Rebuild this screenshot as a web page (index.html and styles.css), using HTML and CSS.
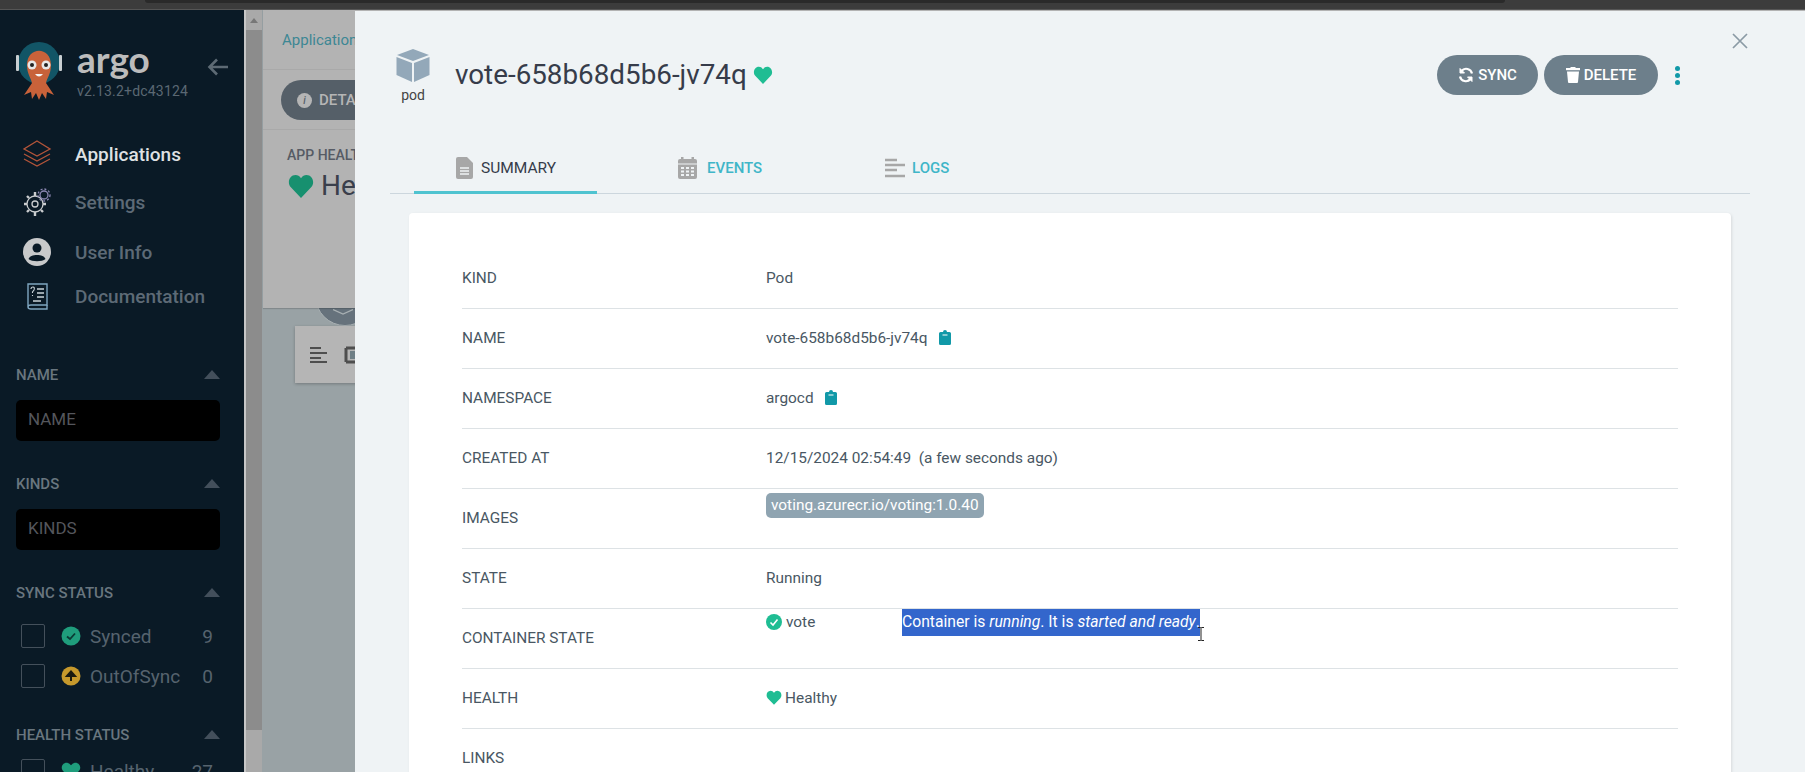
FILE: index.html
```html
<!DOCTYPE html>
<html lang="en">
<head>
    <meta charset="UTF-8">
    <title>vote-658b68d5b6-jv74q - Argo CD</title>
    <link rel="stylesheet" href="styles.css">
</head>
<body>
    <div class="chrome"><div class="chrome-tab"></div></div>
    <div class="main">
        <div class="sidebar">
            <div class="brand">
                <svg class="logo" width="46" height="60" viewBox="0 0 46 60">
                    <circle cx="23" cy="22" r="21" fill="#125566"/>
                    <rect x="0" y="14" width="3" height="16" rx="1" fill="#c9cfd2"/>
                    <rect x="43" y="14" width="3" height="16" rx="1" fill="#c9cfd2"/>
                    <path d="M11 24C11 5 35 5 35 24C35 33 31 37 30 42L38 54 31 51 30 58 26 52 23 59 20 52 16 58 15 51 8 54 16 42C15 37 11 33 11 24Z" fill="#c8623a"/>
                    <circle cx="16" cy="24" r="4.500" fill="#e8e8e8"/>
                    <circle cx="30" cy="24" r="4.500" fill="#e8e8e8"/>
                    <circle cx="16" cy="24" r="2" fill="#222"/>
                    <circle cx="30" cy="24" r="2" fill="#222"/>
                    <path d="M19 33Q23 38 27 33Z" fill="#f4f4f4"/>
                </svg>
                <div class="brand-text">
                    <div class="brand-name">argo</div>
                    <div class="brand-version">v2.13.2+dc43124</div>
                </div>
                <svg class="back" width="22" height="18" viewBox="0 0 22 18"><path d="M21 9H3M10 1.500L2.500 9 10 16.500" fill="none" stroke="#5d6a74" stroke-width="2.600"/></svg>
            </div>

            <div class="nav">
                <div class="nav-item nav-active">
                    <svg width="30" height="30" viewBox="0 0 30 30" fill="none" stroke="#b4553a" stroke-width="1.300"><path d="M15 2L28 10 15 17 2 10Z"/><path d="M2 15L15 22 28 15"/><path d="M2 20L15 27 28 20"/></svg>
                    <span>Applications</span>
                </div>
                <div class="nav-item nav-settings">
                    <svg width="30" height="30" viewBox="0 0 30 30" fill="none" stroke="#c9ccce" stroke-width="1.300"><circle cx="13" cy="17" r="8"/><circle cx="13" cy="17" r="3"/><path d="M13 5v4M13 25v4M2 17h3M21 17h3M5 9l2 2M5 25l2-2M21 25l-2-2" stroke-width="2.400"/><circle cx="22" cy="8" r="4" stroke="#8d89b4"/><circle cx="22" cy="8" r="6" stroke="#8d89b4" stroke-dasharray="2 2"/></svg>
                    <span>Settings</span>
                </div>
                <div class="nav-item nav-user">
                    <svg width="30" height="30" viewBox="0 0 30 30"><circle cx="15" cy="15" r="14" fill="#c8c9ca"/><circle cx="15" cy="11" r="4.500" fill="#0a1a26"/><path d="M6.500 22C8 16.500 22 16.500 23.500 22C20 25 10 25 6.500 22Z" fill="#0a1a26"/></svg>
                    <span>User Info</span>
                </div>
                <div class="nav-item nav-docs">
                    <svg width="30" height="30" viewBox="0 0 30 30" fill="none" stroke="#c9d3d9" stroke-width="1.400"><path d="M6 3H25V24H9Q6 24 6 26V3Z" stroke="#7fa6c0"/><path d="M6 26Q6 28 9 28H25V24" stroke="#7fa6c0"/><path d="M15 8H22M15 12H22M15 16H22M11 20H19"/><path d="M9 8Q9 6 11 6T12 9L10.500 11V12M10.500 14V15" stroke-width="1.100"/></svg>
                    <span>Documentation</span>
                </div>
            </div>

            <div class="filter-head filter-name"><span>NAME</span><i class="caret"></i></div>
            <div class="filter-input">NAME</div>

            <div class="filter-head filter-kinds"><span>KINDS</span><i class="caret"></i></div>
            <div class="filter-input">KINDS</div>

            <div class="filter-head filter-sync"><span>SYNC STATUS</span><i class="caret"></i></div>
            <div class="filter-row">
                <i class="check"></i>
                <svg width="20" height="20" viewBox="0 0 20 20"><circle cx="10" cy="10" r="9.500" fill="#1f9d7c"/><path d="M6 10.500L9 13 14 7.500" fill="none" stroke="#0a3a34" stroke-width="1.800"/></svg>
                <span class="filter-label">Synced</span><span class="filter-count">9</span>
            </div>
            <div class="filter-row">
                <i class="check"></i>
                <svg width="20" height="20" viewBox="0 0 20 20"><circle cx="10" cy="10" r="9.500" fill="#c6992c"/><path d="M10 15V8M6 10L10 5.500 14 10Z" fill="#1a1a10" stroke="#1a1a10" stroke-width="2"/></svg>
                <span class="filter-label">OutOfSync</span><span class="filter-count">0</span>
            </div>

            <div class="filter-head filter-health"><span>HEALTH STATUS</span><i class="caret"></i></div>
            <div class="filter-row">
                <i class="check"></i>
                <svg width="20" height="20" viewBox="0 0 24 24"><path d="M12 22L2.500 12C-1 8 1.500 2 7 2Q10 2 12 5 14 2 17 2C22.500 2 25 8 21.500 12Z" fill="#1f9d7c"/></svg>
                <span class="filter-label">Healthy</span><span class="filter-count">27</span>
            </div>
        </div>

        <div class="page-scroll">
            <i class="scroll-up"></i>
            <div class="page-thumb"></div>
        </div>

        <div class="page">
            <div class="page-top">
                <div class="crumbs">Applications</div>
                <div class="page-actions"><div class="page-btn"><i>i</i>DETAILS</div></div>
                <div class="page-health">
                    <div class="page-health-label">APP HEALTH</div>
                    <div class="page-health-value">
                        <svg width="28" height="24" viewBox="0 0 24 22"><path d="M12 22L2.500 12C-1 8 1.500 1 7 1Q10 1 12 4 14 1 17 1C22.500 1 25 8 21.500 12Z" fill="#17906f"/></svg>
                        <span>Healthy</span>
                    </div>
                </div>
            </div>
            <div class="page-graph">
                <div class="graph-node">
                    <svg class="node-chevron" width="20" height="6" viewBox="0 0 20 6"><path d="M0 0.500L10 5 20 0.500" fill="none" stroke="#a8b0b3" stroke-width="1.200"/></svg>
                </div>
                <div class="graph-tools">
                    <svg width="18" height="16" viewBox="0 0 18 16" fill="none" stroke="#4e4e4e" stroke-width="2"><path d="M0 1H11M0 6H17M0 11H11M0 15H17"/></svg>
                    <svg width="18" height="18" viewBox="0 0 18 18"><path d="M2 2H18M2 16H18M2 2V16" fill="none" stroke="#4e4e4e" stroke-width="3"/><rect x="6" y="5" width="12" height="8" fill="#6f7f86"/></svg>
                </div>
            </div>
        </div>

        <div class="panel">
            <div class="panel-body">
                <svg class="panel-close" width="16" height="16" viewBox="0 0 16 16"><path d="M1 1L15 15M15 1L1 15" stroke="#8b9aa5" stroke-width="1.700"/></svg>

                <div class="panel-head">
                    <div class="kind-box">
                        <svg width="34" height="35" viewBox="0 0 34 35"><path d="M17 1L33 7 17 13 1 7Z" fill="#93a8b9"/><path d="M0.500 9L16 15V34L0.500 27Z" fill="#93a8b9"/><path d="M33.500 9L18 15V34L33.500 27Z" fill="#93a8b9"/></svg>
                        <div class="kind-label">pod</div>
                    </div>
                    <div class="panel-title">vote-658b68d5b6-jv74q</div>
                    <svg class="title-heart" width="20" height="18" viewBox="0 0 24 22"><path d="M12 22L2.500 12C-1 8 1.500 1 7 1Q10 1 12 4 14 1 17 1C22.500 1 25 8 21.500 12Z" fill="#1fbd93"/></svg>
                    <div class="panel-actions">
                        <div class="btn btn-sync">
                            <svg width="16" height="16" viewBox="0 0 16 16" fill="none" stroke="#fff" stroke-width="2.200"><path d="M14 6.500A6 6 0 0 0 3.500 4"/><path d="M2 9.500A6 6 0 0 0 12.500 12"/><path d="M2 1.500V6H6.500L2 1.500Z" fill="#fff" stroke-width="1"/><path d="M14 14.500V10H9.500L14 14.500Z" fill="#fff" stroke-width="1"/></svg>
                            SYNC
                        </div>
                        <div class="btn btn-delete">
                            <svg width="14" height="16" viewBox="0 0 14 16" fill="#fff"><rect x="0" y="1" width="14" height="2.200"/><rect x="4.500" y="0" width="5" height="2"/><path d="M1 4.500H13L12 15Q12 16 11 16H3Q2 16 2 15Z"/></svg>
                            DELETE
                        </div>
                        <div class="kebab"><i></i><i></i><i></i></div>
                    </div>
                </div>

                <div class="tabs">
                    <div class="tab tab-active">
                        <svg width="17" height="22" viewBox="0 0 17 22" fill="#a7a7a7"><path d="M2 0H11L17 6V20Q17 22 15 22H2Q0 22 0 20V2Q0 0 2 0Z"/><path d="M4 11H13M4 14H13M4 17H13" stroke="#eff3f5" stroke-width="1.300"/></svg>
                        <span>SUMMARY</span>
                    </div>
                    <div class="tab tab-events">
                        <svg width="19" height="22" viewBox="0 0 19 22" fill="#a7a7a7"><rect x="0" y="2" width="19" height="20" rx="2"/><rect x="3" y="0" width="2.500" height="4"/><rect x="13.500" y="0" width="2.500" height="4"/><path d="M0 7H19" stroke="#eff3f5"/><path d="M3 11h3M8 11h3M13 11h3M3 14.500h3M8 14.500h3M13 14.500h3M3 18h3M8 18h3M13 18h3" stroke="#eff3f5" stroke-width="1.800"/></svg>
                        <span>EVENTS</span>
                    </div>
                    <div class="tab tab-logs">
                        <svg width="20" height="20" viewBox="0 0 20 20" fill="none" stroke="#a7a7a7" stroke-width="2.400"><path d="M0 2H12M0 7H20M0 12H12M0 18H20"/></svg>
                        <span>LOGS</span>
                    </div>
                </div>

                <div class="card">
                    <div class="row">
                        <div class="row-key">KIND</div>
                        <div class="row-val">Pod</div>
                    </div>
                    <div class="row">
                        <div class="row-key">NAME</div>
                        <div class="row-val">vote-658b68d5b6-jv74q
                            <svg class="clip" width="12" height="15" viewBox="0 0 12 15"><path d="M1.500 2H4Q4 0 6 0T8 2H10.500Q12 2 12 3.500V13.500Q12 15 10.500 15H1.500Q0 15 0 13.500V3.500Q0 2 1.500 2Z" fill="#1199a8"/><path d="M3.500 5H8.500" stroke="#fff" stroke-width="1"/></svg>
                        </div>
                    </div>
                    <div class="row">
                        <div class="row-key">NAMESPACE</div>
                        <div class="row-val">argocd
                            <svg class="clip" width="12" height="15" viewBox="0 0 12 15"><path d="M1.500 2H4Q4 0 6 0T8 2H10.500Q12 2 12 3.500V13.500Q12 15 10.500 15H1.500Q0 15 0 13.500V3.500Q0 2 1.500 2Z" fill="#1199a8"/><path d="M3.500 5H8.500" stroke="#fff" stroke-width="1"/></svg>
                        </div>
                    </div>
                    <div class="row">
                        <div class="row-key">CREATED AT</div>
                        <div class="row-val row-pre">12/15/2024 02:54:49  (a few seconds ago)</div>
                    </div>
                    <div class="row">
                        <div class="row-key">IMAGES</div>
                        <div class="row-val row-top"><span class="tag">voting.azurecr.io/voting:1.0.40</span></div>
                    </div>
                    <div class="row">
                        <div class="row-key">STATE</div>
                        <div class="row-val">Running</div>
                    </div>
                    <div class="row">
                        <div class="row-key">CONTAINER STATE</div>
                        <div class="row-val row-top container">
                            <div class="container-name">
                                <svg width="16" height="16" viewBox="0 0 16 16"><circle cx="8" cy="8" r="8" fill="#1fbd93"/><path d="M4.500 8.500L7 11 11.500 5.500" fill="none" stroke="#fff" stroke-width="1.600"/></svg>
                                vote
                            </div>
                            <div class="selected-text">Container is <em>running</em>. It is <em>started and ready</em>.</div>
                            <svg class="ibeam" width="8" height="14" viewBox="0 0 8 14"><path d="M1 0.500H3.500L4 1 4.500 0.500H7M4 1V13M1 13.500H3.500L4 13 4.500 13.500H7" fill="none" stroke="#222" stroke-width="1"/></svg>
                        </div>
                    </div>
                    <div class="row">
                        <div class="row-key">HEALTH</div>
                        <div class="row-val health-val">
                            <svg width="16" height="15" viewBox="0 0 24 22"><path d="M12 22L2.500 12C-1 8 1.500 1 7 1Q10 1 12 4 14 1 17 1C22.500 1 25 8 21.500 12Z" fill="#1fbd93"/></svg>
                            Healthy
                        </div>
                    </div>
                    <div class="row">
                        <div class="row-key">LINKS</div>
                        <div class="row-val"></div>
                    </div>
                </div>
            </div>
            <div class="panel-scroll">
                <i class="scroll-up"></i>
                <div class="panel-thumb"></div>
            </div>
        </div>
    </div>
</body>
</html>
```

FILE: styles.css
```css
html, body {
    margin: 0;
    padding: 0;
    height: 772px;
    overflow: hidden;
}

body {
    font-family: Roboto, "Liberation Sans", sans-serif;
    background-color: #999;
    color: #363c4a;
}

.chrome {
    height: 10px;
    background-color: #3c3c3c;
    border-bottom: 1px solid #555;
    box-sizing: border-box;
}

.chrome-tab {
    height: 3px;
    margin: 0 300px 0 145px;
    background-color: #2a2a2a;
    border-radius: 0 0 6px 6px;
}

.main {
    display: flex;
    height: 762px;
    position: relative;
    overflow: hidden;
}

/* left nav */

.sidebar {
    width: 244px;
    flex: none;
    background-color: #0a1a26;
    box-sizing: border-box;
    padding: 0 24px 0 16px;
}

.brand {
    display: flex;
    height: 81px;
    padding-top: 31px;
    position: relative;
}

.logo {
    flex: none;
}

.brand-text {
    margin-left: 15px;
}

.brand-name {
    font-family: Lato, sans-serif;
    font-size: 37px;
    font-weight: 700;
    line-height: 34px;
    margin-top: 1px;
    color: #bcbcbc;
}

.brand-version {
    font-size: 14px;
    line-height: 16px;
    letter-spacing: 0.2px;
    margin-top: 7px;
    color: #5b6873;
}

.back {
    position: absolute;
    left: 191px;
    top: 48px;
}

.nav-item {
    display: flex;
    align-items: center;
    height: 30px;
    font-size: 19px;
    font-weight: 500;
    color: #5d6a76;
}

.nav-item svg {
    flex: none;
    margin: 0 23px 0 6px;
}

.nav-active {
    color: #dfe1e3;
    margin-top: 17px;
}

.nav-settings {
    margin-top: 18px;
}

.nav-user {
    margin-top: 20px;
}

.nav-docs {
    margin-top: 14px;
}

.filter-head {
    display: flex;
    justify-content: space-between;
    align-items: center;
    height: 16px;
    font-size: 15px;
    font-weight: 500;
    color: #69767f;
}

.filter-name {
    margin-top: 56px;
}

.filter-kinds {
    margin-top: 35px;
}

.filter-sync {
    margin-top: 35px;
}

.filter-health {
    margin-top: 39px;
}

.caret {
    width: 0;
    height: 0;
    border-left: 8px solid transparent;
    border-right: 8px solid transparent;
    border-bottom: 9px solid #434f5b;
    margin-top: -2px;
}

.filter-input {
    height: 41px;
    line-height: 39px;
    margin-top: 17px;
    padding-left: 12px;
    background-color: #000;
    border-radius: 5px;
    font-size: 17px;
    color: #54565c;
}

.filter-row {
    display: flex;
    align-items: center;
    height: 24px;
    margin-top: 16px;
    padding-left: 5px;
    font-size: 19px;
    color: #56636e;
}

.filter-sync + .filter-row {
    margin-top: 23px;
}

.check {
    width: 22px;
    height: 22px;
    flex: none;
    border: 1px solid #44505b;
    border-radius: 2px;
    margin-right: 16px;
}

.filter-label {
    flex: 1;
    margin-left: 9px;
}

.filter-count {
    margin-right: 7px;
}

/* page behind the panel */

.page-scroll {
    width: 18px;
    flex: none;
    background-color: #a9a9a9;
    border-left: 2px solid #c7c7c7;
    box-sizing: border-box;
    position: relative;
}

.scroll-up {
    display: block;
    width: 0;
    height: 0;
    margin: 8px auto 0;
    border-left: 4px solid transparent;
    border-right: 4px solid transparent;
    border-bottom: 5px solid #777;
}

.page-thumb {
    height: 700px;
    margin-top: 7px;
    background-color: #8c8c8c;
}

.page {
    flex: 1;
    background-color: #99a2a5;
    padding-left: 1px;
}

.page-top {
    position: relative;
    z-index: 1;
    height: 298px;
    background-color: #b3b3b3;
    box-sizing: border-box;
    box-shadow: 0 1px 1px rgba(0, 0, 0, 0.15);
}

.crumbs {
    height: 60px;
    padding: 21px 0 0 19px;
    box-sizing: border-box;
    font-size: 15px;
    color: #3d8794;
    border-bottom: 1px solid #a9a9a9;
    white-space: nowrap;
}

.page-actions {
    height: 60px;
    padding: 10px 0 0 18px;
    box-sizing: border-box;
    border-bottom: 1px solid #a9a9a9;
}

.page-btn {
    display: flex;
    align-items: center;
    width: 120px;
    height: 40px;
    padding-left: 16px;
    box-sizing: border-box;
    border-radius: 20px;
    background-color: #555f68;
    color: #b5b5b5;
    font-size: 15px;
    font-weight: 500;
    white-space: nowrap;
}

.page-btn i {
    display: inline-block;
    width: 15px;
    height: 15px;
    line-height: 15px;
    margin-right: 7px;
    border-radius: 50%;
    background-color: #b5b5b5;
    color: #555f68;
    font-size: 10px;
    text-align: center;
}

.page-health {
    padding: 17px 0 0 24px;
}

.page-health-label {
    font-size: 14px;
    font-weight: 500;
    color: #565b65;
    white-space: nowrap;
}

.page-health-value {
    display: flex;
    align-items: center;
    gap: 6px;
    margin-top: 6px;
    font-size: 28px;
    color: #3a3f4b;
    white-space: nowrap;
}

.page-graph {
    position: relative;
    height: 400px;
}

.graph-node {
    position: absolute;
    left: 52px;
    top: -42px;
    width: 60px;
    height: 60px;
    border-radius: 50%;
    background-color: #66727c;
    border: 1px solid #a8b0b3;
    box-sizing: border-box;
}

.node-chevron {
    position: absolute;
    left: 17px;
    top: 42px;
}

.graph-tools {
    position: absolute;
    left: 32px;
    top: 18px;
    width: 200px;
    height: 57px;
    display: flex;
    align-items: center;
    gap: 16px;
    padding-left: 15px;
    box-sizing: border-box;
    background-color: #b5b5b5;
    box-shadow: 0 1px 3px rgba(0, 0, 0, 0.25);
}

/* sliding panel */

.panel {
    position: absolute;
    left: 355px;
    right: 0;
    top: 1px;
    bottom: 0;
    z-index: 2;
    display: flex;
    background-color: #eff3f5;
}

.panel-body {
    flex: 1;
    position: relative;
    padding: 0 56px 0 35px;
}

.panel-close {
    position: absolute;
    left: 1377px;
    top: 22px;
}

.panel-head {
    display: flex;
    height: 137px;
    box-sizing: border-box;
    padding-top: 37px;
}

.kind-box {
    width: 46px;
    text-align: center;
}

.kind-label {
    font-size: 14px;
    line-height: 16px;
    margin-top: 0;
    color: #444;
}

.panel-title {
    margin-left: 19px;
    margin-top: 7px;
    font-size: 27.800px;
    line-height: 40px;
    color: #363c4a;
    white-space: nowrap;
}

.title-heart {
    margin: 18px 0 0 6px;
}

.panel-actions {
    display: flex;
    margin-left: auto;
    margin-top: 7px;
    height: 40px;
    margin-right: 70px;
}

.btn {
    display: flex;
    align-items: center;
    justify-content: center;
    gap: 4px;
    height: 40px;
    border-radius: 20px;
    background-color: #6d7f8b;
    color: #fff;
    font-size: 15px;
    font-weight: 500;
}

.btn-sync {
    width: 101px;
}

.btn-delete {
    width: 114px;
    margin-left: 6px;
}

.kebab {
    display: flex;
    flex-direction: column;
    justify-content: center;
    gap: 2px;
    margin-left: 17px;
}

.kebab i {
    width: 5px;
    height: 5px;
    border-radius: 50%;
    background-color: #1199a8;
}

.tabs {
    display: flex;
    height: 46px;
    border-bottom: 1px solid #ccd6dd;
    width: 1360px;
    box-sizing: border-box;
}

.tab {
    display: flex;
    align-items: center;
    gap: 8px;
    height: 46px;
    box-sizing: border-box;
    padding-bottom: 7px;
    font-size: 15px;
    font-weight: 500;
    color: #3fb6c8;
}

.tab-active {
    width: 183px;
    margin-left: 24px;
    padding-left: 42px;
    padding-bottom: 4px;
    font-size: 15.500px;
    font-weight: 400;
    color: #363c4a;
    border-bottom: 3px solid #4fc3d0;
}

.tab-events {
    margin-left: 81px;
    width: 207px;
    gap: 10px;
}

.tab-logs {
    gap: 7px;
}

.card {
    width: 1322px;
    margin: 19px 0 0 19px;
    padding: 0 53px 0;
    box-sizing: border-box;
    background-color: #fff;
    border-radius: 4px;
    box-shadow: 1px 1px 3px rgba(0, 0, 0, 0.1);
}

.row {
    display: flex;
    height: 60px;
    box-sizing: border-box;
    padding-bottom: 2px;
    align-items: center;
    border-bottom: 1px solid #dde2e5;
    font-size: 15.400px;
}

.row:first-child {
    height: 96px;
    padding-top: 36px;
}

.row-key {
    width: 304px;
    flex: none;
    color: #495763;
}

.row-val {
    color: #495763;
    white-space: nowrap;
}

.row-pre {
    white-space: pre;
}

.clip {
    margin-left: 8px;
    vertical-align: -2px;
}

.row-top {
    align-self: flex-start;
}

.tag {
    display: inline-block;
    height: 25px;
    line-height: 24px;
    margin-top: 4px;
    padding: 0 5px;
    border-radius: 5px;
    background-color: #8fa4b1;
    color: #fff;
}

.container {
    display: flex;
    position: relative;
}

.container-name {
    width: 136px;
    height: 25px;
    display: flex;
    align-items: center;
    gap: 4px;
}

.selected-text {
    height: 27px;
    line-height: 25px;
    font-size: 15.700px;
    background-color: #3366cc;
    color: #fff;
}

.ibeam {
    position: absolute;
    left: 431px;
    top: 18px;
}

.health-val {
    display: flex;
    align-items: center;
    gap: 3px;
}

.panel-scroll {
    width: 18px;
    flex: none;
    background-color: #f1f1f1;
}

.panel-scroll .scroll-up {
    margin-top: 8px;
    border-bottom-color: #a3a3a3;
}

.panel-thumb {
    height: 190px;
    width: 16px;
    margin-top: 7px;
    background-color: #c1c1c1;
}
```
